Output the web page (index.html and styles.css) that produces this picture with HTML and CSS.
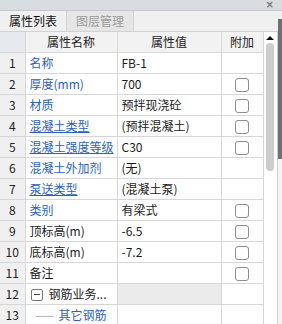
FILE: index.html
```html
<!DOCTYPE html>
<html lang="zh-CN">
<head>
    <meta charset="UTF-8">
    <title>属性列表</title>
    <link rel="stylesheet" href="styles.css">
</head>
<body>
    <div class="topbar"><span class="close">×</span></div>
    <div class="tabs">
        <div class="tab active">属性列表</div>
        <div class="tab">图层管理</div>
    </div>
    <div class="main">
        <table class="props">
            <colgroup>
                <col class="c-num">
                <col class="c-name">
                <col class="c-val">
                <col class="c-add">
            </colgroup>
            <tr class="head">
                <th class="num"></th>
                <th>属性名称</th>
                <th>属性值</th>
                <th>附加</th>
            </tr>
            <tr><td class="num">1</td><td class="name blue">名称</td><td class="val">FB-1</td><td></td></tr>
            <tr><td class="num">2</td><td class="name blue">厚度(mm)</td><td class="val">700</td><td><span class="box"></span></td></tr>
            <tr><td class="num">3</td><td class="name blue">材质</td><td class="val">预拌现浇砼</td><td><span class="box"></span></td></tr>
            <tr><td class="num">4</td><td class="name blue link">混凝土类型</td><td class="val">(预拌混凝土)</td><td><span class="box"></span></td></tr>
            <tr><td class="num">5</td><td class="name blue link">混凝土强度等级</td><td class="val">C30</td><td><span class="box"></span></td></tr>
            <tr><td class="num">6</td><td class="name blue">混凝土外加剂</td><td class="val">(无)</td><td></td></tr>
            <tr><td class="num">7</td><td class="name blue link">泵送类型</td><td class="val">(混凝土泵)</td><td></td></tr>
            <tr><td class="num">8</td><td class="name blue">类别</td><td class="val">有梁式</td><td><span class="box"></span></td></tr>
            <tr><td class="num">9</td><td class="name">顶标高(m)</td><td class="val">-6.5</td><td><span class="box"></span></td></tr>
            <tr><td class="num">10</td><td class="name">底标高(m)</td><td class="val">-7.2</td><td><span class="box"></span></td></tr>
            <tr><td class="num">11</td><td class="name">备注</td><td class="val"></td><td><span class="box"></span></td></tr>
            <tr><td class="num">12</td><td class="name"><span class="minus"></span>钢筋业务...</td><td class="val group"></td><td></td></tr>
            <tr><td class="num">13</td><td class="name blue"><span class="branch"></span>其它钢筋</td><td class="val"></td><td></td></tr>
        </table>
        <div class="scroll">
            <div class="arrow"></div>
            <div class="thumb"></div>
        </div>
        <div class="edge"><div class="edge-bar"></div></div>
    </div>
</body>
</html>
```

FILE: styles.css
```css
html, body {
    margin: 0;
    padding: 0;
}
body {
    width: 282px;
    height: 324px;
    overflow: hidden;
    background: #ffffff;
    font-family: "Noto Sans CJK SC", "Liberation Sans", sans-serif;
    font-size: 12px;
    color: #1a1a1a;
}
.topbar {
    height: 10px;
    background: #d9dce1;
    border-bottom: 1px solid #c4c7cc;
    display: flex;
    justify-content: flex-end;
}
.close {
    margin-right: 8px;
    font-family: "DejaVu Sans", sans-serif;
    font-size: 10px;
    font-weight: bold;
    color: #72767c;
    line-height: 10px;
}
.tabs {
    display: flex;
    height: 20px;
    background: #f0f0f0;
    border-bottom: 1px solid #d2d2d2;
}
.tab {
    width: 66px;
    line-height: 20px;
    text-align: center;
    color: #9a9a9a;
    background: #e6e6e6;
    border-right: 1px solid #d2d2d2;
}
.tab.active {
    color: #111111;
    background: #f0f0f0;
}
.main {
    display: flex;
    align-items: flex-start;
}
.props {
    width: 263px;
    border-collapse: collapse;
    table-layout: fixed;
}
.c-num { width: 25px; }
.c-name { width: 92px; }
.c-val { width: 104px; }
.c-add { width: 42px; }
.props th, .props td {
    height: 20px;
    padding: 0;
    border: 1px solid #d6d6d6;
    white-space: nowrap;
    overflow: hidden;
    line-height: 20px;
}
.props tr:first-child th { border-top: none; }
.props th {
    font-weight: normal;
    background: #f2f2f2;
    color: #222222;
    text-align: center;
}
.props th.num {
    background: #e6eaef;
    border-left: none;
}
.props td.num {
    border-left: none;
    background: #f0f0f0;
    text-align: center;
    color: #222222;
}
.props td:last-child {
    text-align: center;
}
.name {
    padding-left: 4px !important;
}
.val {
    padding-left: 4px !important;
}
.blue {
    color: #2a5fc9;
}
.link {
    text-decoration: underline;
}
.group {
    background: #ebebeb;
}
.box {
    display: inline-block;
    width: 12px;
    height: 12px;
    border: 1px solid #8c8c8c;
    border-radius: 3px;
    vertical-align: middle;
    margin-top: -2px;
}
.minus {
    display: inline-block;
    position: relative;
    width: 10px;
    height: 10px;
    border: 1px solid #777777;
    border-radius: 2px;
    vertical-align: middle;
    margin: -2px 6px 0 1px;
}
.minus::after {
    content: "";
    position: absolute;
    left: 2px;
    top: 4px;
    width: 6px;
    height: 1px;
    background: #444444;
}
.branch {
    display: inline-block;
    width: 17px;
    height: 1px;
    background: #b8b8b8;
    vertical-align: middle;
    margin: 0 6px 0 6px;
}
.scroll {
    width: 15px;
    height: 293px;
    background: #ffffff;
    border-right: 1px solid #cfcfcf;
    display: flex;
    flex-direction: column;
    align-items: center;
}
.arrow {
    margin-top: 4px;
    width: 0;
    height: 0;
    border-left: 4px solid transparent;
    border-right: 4px solid transparent;
    border-bottom: 4px solid #111111;
}
.thumb {
    margin-top: 3px;
    width: 8px;
    height: 128px;
    background: #cdcdcd;
    border-radius: 4px;
}
.edge {
    width: 4px;
    height: 293px;
    background: #f4f4f4;
}
.edge-bar {
    margin-top: -13px;
    height: 140px;
    background: #6c7177;
}
```
